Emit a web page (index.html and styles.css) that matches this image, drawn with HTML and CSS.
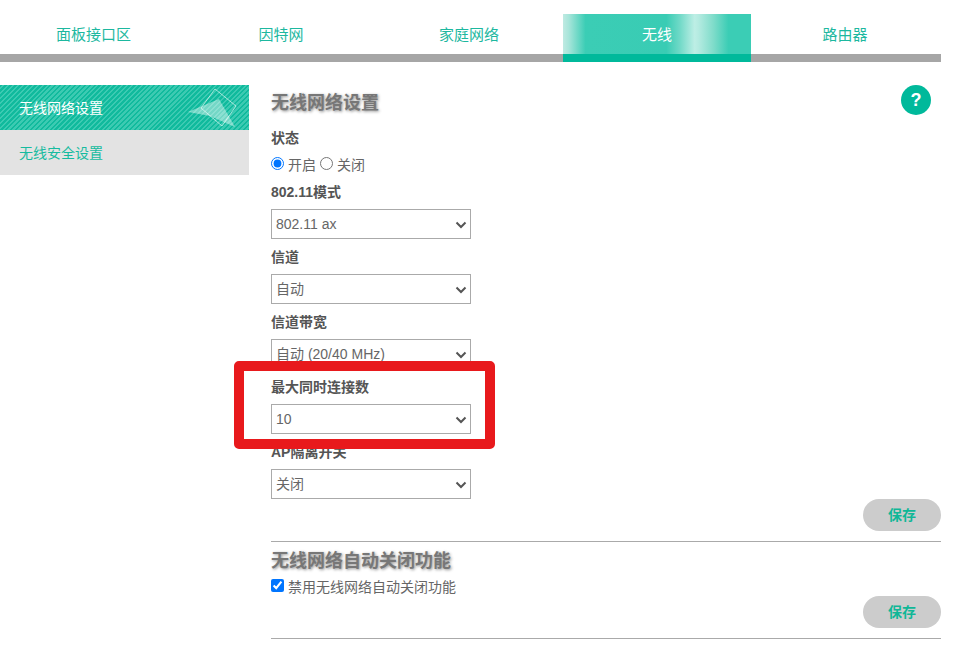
FILE: index.html
```html
<!DOCTYPE html>
<html lang="zh-CN">
<head>
<meta charset="utf-8">
<title>无线网络设置</title>
<link rel="stylesheet" href="styles.css">
</head>
<body>
<div class="page">
  <nav class="tabs">
    <a class="tab">面板接口区</a>
    <a class="tab">因特网</a>
    <a class="tab">家庭网络</a>
    <a class="tab tab-active">无线</a>
    <a class="tab tab-last">路由器</a>
  </nav>
  <div class="layout">
    <aside class="side">
      <a class="side-item side-active">无线网络设置
        <svg class="side-icon" width="50" height="45" viewBox="0 0 50 45">
          <polygon points="0,27 31,14 47,42 22,31" fill="#fff" fill-opacity="0.42"/>
          <polygon points="27,4 48,21 34,41 13,23" fill="none" stroke="#fff" stroke-opacity="0.6" stroke-width="1"/>
        </svg>
      </a>
      <a class="side-item">无线安全设置</a>
    </aside>
    <main class="main">
      <div class="head">
        <h2 class="title">无线网络设置</h2>
        <span class="help">?</span>
      </div>
      <div class="label">状态</div>
      <div class="choice choice-gap">
        <input class="mark" type="radio" name="st" checked><span>开启</span>
        <input class="mark mark-next" type="radio" name="st"><span>关闭</span>
      </div>
      <div class="label">802.11模式</div>
      <select class="pick"><option>802.11 ax</option></select>
      <div class="label">信道</div>
      <select class="pick"><option>自动</option></select>
      <div class="label">信道带宽</div>
      <select class="pick"><option>自动 (20/40 MHz)</option></select>
      <div class="label">最大同时连接数</div>
      <select class="pick"><option>10</option></select>
      <div class="label">AP隔离开关</div>
      <select class="pick pick-last"><option>关闭</option></select>
      <div class="actions"><button class="save">保存</button></div>
      <hr class="rule">
      <h2 class="title title-second">无线网络自动关闭功能</h2>
      <div class="choice choice-check">
        <input class="mark" type="checkbox" checked><span>禁用无线网络自动关闭功能</span>
      </div>
      <div class="actions"><button class="save">保存</button></div>
      <hr class="rule">
    </main>
  </div>
  <div class="callout"></div>
</div>
</body>
</html>
```
FILE: styles.css
```css
html, body {
  margin: 0;
  padding: 0;
  background: #fff;
}
body {
  font-family: "Liberation Sans", "Noto Sans CJK SC", sans-serif;
  font-size: 14px;
  color: #666;
  overflow: hidden;
}
.page {
  position: relative;
  width: 941px;
  height: 651px;
  padding-top: 14px;
  box-sizing: border-box;
}
.tabs {
  display: grid;
  grid-template-columns: 187px 188px 188px 188px 190px;
  height: 48px;
  box-sizing: border-box;
  border-bottom: 8px solid #a6a6a6;
}
.tab {
  display: flex;
  align-items: center;
  justify-content: center;
  height: 40px;
  padding-bottom: 2px;
  box-sizing: border-box;
  font-size: 15px;
  color: #1db89f;
}
.tab-last {
  padding-right: 2px;
}
.tab-active {
  height: 48px;
  color: #fff;
  border-bottom: 8px solid #00b99b;
  background: linear-gradient(90deg,
    #bfeae2 0, #a8e5da 3%, #3bcdb5 12%, #39ccb4 55%, #6fd9c7 62%, #bdeee5 70%,
    #b5ebe1 72%, #7fdcca 80%, #3bcdb5 88%, #3bcdb5 100%);
}
.layout {
  display: flex;
  margin-top: 23px;
}
.side {
  width: 249px;
  flex: none;
}
.side-item {
  position: relative;
  display: flex;
  align-items: center;
  height: 45px;
  padding: 0 0 2px 19px;
  box-sizing: border-box;
  background: #e3e3e3;
  color: #16bb9f;
}
.side-active {
  color: #fff;
  background: repeating-linear-gradient(135deg, #10ba9d 0, #10ba9d 1.75px, #3ccab2 1.75px, #3ccab2 3.5px);
}
.side-icon {
  position: absolute;
  top: 0;
  right: 11px;
}
.main {
  flex: 1;
  margin-left: 22px;
  min-width: 0;
}
.head {
  display: flex;
  justify-content: space-between;
  align-items: flex-start;
  height: 43px;
  padding-right: 10px;
}
.title {
  margin: 7px 0 0;
  font-size: 18px;
  line-height: 22px;
  font-weight: bold;
  color: #777;
  text-shadow: 1px 1px 3px rgba(0, 0, 0, 0.45);
}
.title-second {
  margin: 8px 0 5px;
}
.help {
  display: flex;
  align-items: center;
  justify-content: center;
  width: 30px;
  height: 30px;
  border-radius: 50%;
  background: #00b99b;
  color: #fff;
  font-size: 18px;
  font-weight: bold;
}
.label {
  height: 20px;
  line-height: 20px;
  margin-bottom: 7px;
  font-weight: bold;
  color: #555;
}
.choice {
  display: flex;
  align-items: center;
  height: 20px;
}
.choice span {
  margin-bottom: 1px;
}
.choice-gap {
  margin-bottom: 7px;
}
.choice-gap span {
  margin-bottom: 3px;
}
.choice-check {
  height: 19px;
}
.mark {
  width: 13px;
  height: 13px;
  margin: 0 4px 3px 0;
}
.mark-next {
  margin-left: 4px;
}
.pick {
  display: block;
  width: 200px;
  height: 30px;
  margin: 0 0 8px;
  padding: 0 20px 0 4px;
  border: 1px solid #aaa;
  border-radius: 0;
  appearance: none;
  background: #fff url("data:image/svg+xml,%3Csvg xmlns='http://www.w3.org/2000/svg' width='12' height='8' viewBox='0 0 12 8'%3E%3Cpath d='M1.5 1.5L6 6L10.5 1.5' fill='none' stroke='%23555' stroke-width='2'/%3E%3C/svg%3E") no-repeat 183px 11px;
  color: #666;
  font-family: inherit;
  font-size: 14px;
}
.pick-last {
  margin-bottom: 0;
}
.actions {
  display: flex;
  justify-content: flex-end;
}
.save {
  width: 78px;
  height: 32px;
  padding: 0 0 2px;
  border: 0;
  border-radius: 16px;
  background: #ccc;
  color: #10b797;
  font-family: inherit;
  font-size: 14px;
  font-weight: bold;
}
.rule {
  height: 1px;
  margin: 10px 0 0;
  border: 0;
  background: #aaa;
}
.callout {
  position: absolute;
  left: 234px;
  top: 361px;
  width: 261px;
  height: 88px;
  box-sizing: border-box;
  border: 10px solid #e8191c;
  border-radius: 5px;
}
```
